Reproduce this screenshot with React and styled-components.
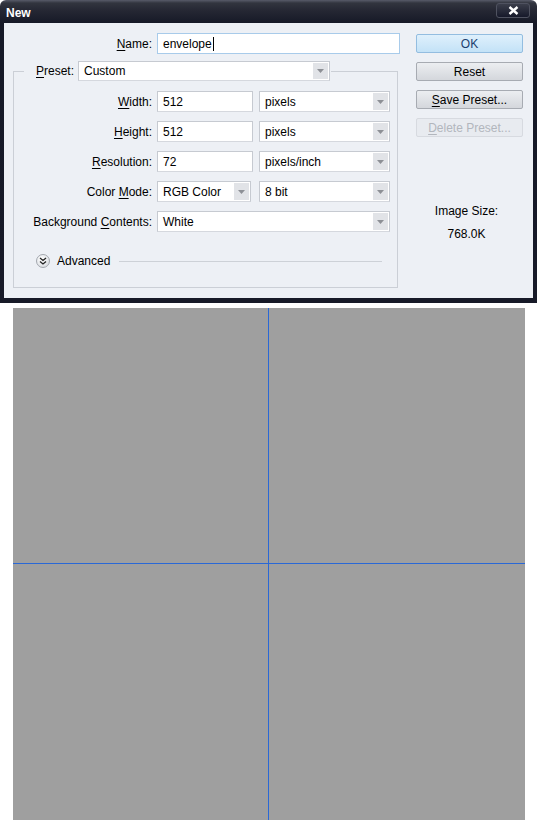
import React from "react";
import styled, { createGlobalStyle, css } from "styled-components";

const Global = createGlobalStyle`
  html, body { margin: 0; padding: 0; background: #ffffff; }
  body { font-family: "Liberation Sans", Arial, sans-serif; font-size: 12px; color: #000; }
  * { box-sizing: border-box; }
`;

const Window = styled.div`
  width: 537px;
  padding: 0 4px 5px 4px;
  border-radius: 6px 6px 0 0;
  background: linear-gradient(#585b69 0px, #32353f 3px, #262834 10px, #161927 23px, #171a28 100%);
`;

const TitleBar = styled.div`
  height: 23px;
  display: flex;
  align-items: center;
  justify-content: space-between;
  padding: 0 3px 0 2px;
`;

const Title = styled.div`
  color: #ffffff;
  font-weight: bold;
  font-size: 12px;
  margin-top: 2px;
`;

const CloseBtn = styled.div`
  width: 34px;
  height: 15px;
  margin-top: -2px;
  border-radius: 3px;
  border: 1px solid #4f5260;
  background: linear-gradient(#3b3e4b, #16192a);
  display: flex;
  align-items: center;
  justify-content: center;
`;

const Body = styled.div`
  background: #edf0f5;
  display: flex;
  gap: 16px;
  padding: 10px 10px 10px 9px;
  height: 275px;
`;

const Main = styled.div`
  width: 387px;
  display: flex;
  flex-direction: column;
`;

const NameRow = styled.div`
  display: flex;
  align-items: center;
  gap: 5px;
`;

const Label = styled.div`
  width: ${(p) => p.$w}px;
  text-align: right;
  white-space: nowrap;
  line-height: 14px;
`;

const U = styled.span`
  text-decoration: underline;
  text-underline-offset: 2px;
  text-decoration-thickness: 1px;
`;

const fieldBase = css`
  height: 21px;
  background: #ffffff;
  border: 1px solid #c6cad1;
  border-bottom-color: #d5d8de;
  display: flex;
  align-items: center;
  padding-left: 5px;
  white-space: nowrap;
`;

const TextBox = styled.div`
  ${fieldBase};
  width: ${(p) => p.$w}px;
  ${(p) =>
    p.$focus &&
    css`
      border-color: #a8cbea;
    `}
`;

const Caret = styled.span`
  display: inline-block;
  width: 1px;
  height: 14px;
  background: #000;
  margin-left: 1px;
`;

const SelectBox = styled.div`
  ${fieldBase};
  width: ${(p) => p.$w}px;
  ${(p) => p.$h && css`height: ${p.$h}px;`}
  justify-content: space-between;
  padding-right: 1px;
`;

const ArrowBox = styled.div`
  width: 15px;
  height: calc(100% - 2px);
  background: #e1e3e7;
  display: flex;
  align-items: center;
  justify-content: center;
`;

const Select = ({ w, h, children }) => (
  <SelectBox $w={w} $h={h}>
    <span>{children}</span>
    <ArrowBox>
      <svg width="7" height="4" viewBox="0 0 7 4">
        <path d="M0 0h7L3.5 4z" fill="#8d9096" />
      </svg>
    </ArrowBox>
  </SelectBox>
);

const Group = styled.fieldset`
  margin: 7px 0 0 0;
  width: 385px;
  padding: 0 0 19px 0;
  border: 1px solid #cbcfd6;
  min-width: 0;
`;

const Legend = styled.legend`
  margin-left: 10px;
  padding: 0 1px 0 12px;
  display: flex;
  align-items: center;
  gap: 4px;
`;

const Rows = styled.div`
  padding-top: 10px;
  display: flex;
  flex-direction: column;
  gap: 9px;
`;

const Row = styled.div`
  display: flex;
  align-items: center;
`;

const Fields = styled.div`
  display: flex;
  align-items: center;
  gap: ${(p) => p.$gap || 6}px;
  margin-left: 5px;
`;

const AdvancedRow = styled.div`
  display: flex;
  align-items: center;
  height: 14px;
  margin-top: 22px;
  padding-left: 22px;
  padding-right: 15px;
`;

const RoundIcon = styled.div`
  width: 14px;
  height: 14px;
  border-radius: 50%;
  border: 1px solid #a3a7ae;
  background: radial-gradient(circle at 40% 35%, #ffffff, #dfe2e6 70%, #c6c9cf);
  display: flex;
  align-items: center;
  justify-content: center;
`;

const AdvText = styled.span`
  margin-left: 7px;
  line-height: 14px;
`;

const Rule = styled.div`
  flex: 1;
  height: 1px;
  background: #cdd1d7;
  margin-left: 9px;
`;

const Side = styled.div`
  width: 107px;
  display: flex;
  flex-direction: column;
  padding-top: 1px;
`;

const Buttons = styled.div`
  display: flex;
  flex-direction: column;
  gap: 9px;
`;

const Button = styled.div`
  height: 19px;
  border-radius: 2px;
  display: flex;
  align-items: center;
  justify-content: center;
  border: 1px solid #a7abb2;
  background: linear-gradient(#eceef1, #d4d7dc);
  color: #000;
  ${(p) =>
    p.$primary &&
    css`
      border-color: #93bde0;
      background: linear-gradient(#dff0fc, #c3e2f7);
      color: #1c3f6e;
    `}
  ${(p) =>
    p.$disabled &&
    css`
      border-color: #d7dae0;
      background: #e8ebf0;
      color: #b2b6bd;
    `}
`;

const SizeInfo = styled.div`
  margin-top: 66px;
  display: flex;
  flex-direction: column;
  align-items: center;
  gap: 7px;
  padding-right: 6px;
  line-height: 16px;
`;

const CanvasWrap = styled.div`
  padding: 5px 0 0 13px;
`;

const Canvas = styled.div`
  position: relative;
  width: 512px;
  height: 512px;
  background: #9f9f9f;
`;

const Guide = styled.div`
  position: absolute;
  background: #2a68d6;
  ${(p) =>
    p.$vertical
      ? css`
          top: 0;
          bottom: 0;
          left: 255px;
          width: 1px;
        `
      : css`
          left: 0;
          right: 0;
          top: 255px;
          height: 1px;
        `}
`;

export default function App() {
  const rows = [
    { label: <><U>W</U>idth:</>, value: "512", unit: "pixels" },
    { label: <><U>H</U>eight:</>, value: "512", unit: "pixels" },
    { label: <><U>R</U>esolution:</>, value: "72", unit: "pixels/inch" },
  ];
  return (
    <>
      <Global />
      <Window>
        <TitleBar>
          <Title>New</Title>
          <CloseBtn>
            <svg width="11" height="9" viewBox="0 0 11 9">
              <path d="M1.5 1l8 7M9.5 1l-8 7" stroke="#fff" strokeWidth="2.4" />
            </svg>
          </CloseBtn>
        </TitleBar>
        <Body>
          <Main>
            <NameRow>
              <Label $w={139}>
                <U>N</U>ame:
              </Label>
              <TextBox $w={243} $focus>
                envelope
                <Caret />
              </TextBox>
            </NameRow>
            <Group>
              <Legend>
                <span>
                  <U>P</U>reset:
                </span>
                <Select w={252} h={20}>Custom</Select>
              </Legend>
              <Rows>
                {rows.map((r, i) => (
                  <Row key={i}>
                    <Label $w={138}>{r.label}</Label>
                    <Fields>
                      <TextBox $w={96}>{r.value}</TextBox>
                      <Select w={131}>{r.unit}</Select>
                    </Fields>
                  </Row>
                ))}
                <Row>
                  <Label $w={138}>
                    Color <U>M</U>ode:
                  </Label>
                  <Fields $gap={8}>
                    <Select w={94}>RGB Color</Select>
                    <Select w={131}>8 bit</Select>
                  </Fields>
                </Row>
                <Row>
                  <Label $w={138}>
                    Background <U>C</U>ontents:
                  </Label>
                  <Fields>
                    <Select w={233}>White</Select>
                  </Fields>
                </Row>
              </Rows>
              <AdvancedRow>
                <RoundIcon>
                  <svg width="8" height="8" viewBox="0 0 8 8">
                    <path
                      d="M1 1l3 2.5L7 1M1 4.5l3 2.5 3-2.5"
                      fill="none"
                      stroke="#222"
                      strokeWidth="1.3"
                    />
                  </svg>
                </RoundIcon>
                <AdvText>Advanced</AdvText>
                <Rule />
              </AdvancedRow>
            </Group>
          </Main>
          <Side>
            <Buttons>
              <Button $primary>OK</Button>
              <Button>Reset</Button>
              <Button>
                <span>
                  <U>S</U>ave Preset...
                </span>
              </Button>
              <Button $disabled>
                <span>
                  <U>D</U>elete Preset...
                </span>
              </Button>
            </Buttons>
            <SizeInfo>
              <span>Image Size:</span>
              <span>768.0K</span>
            </SizeInfo>
          </Side>
        </Body>
      </Window>
      <CanvasWrap>
        <Canvas>
          <Guide $vertical />
          <Guide />
        </Canvas>
      </CanvasWrap>
    </>
  );
}
